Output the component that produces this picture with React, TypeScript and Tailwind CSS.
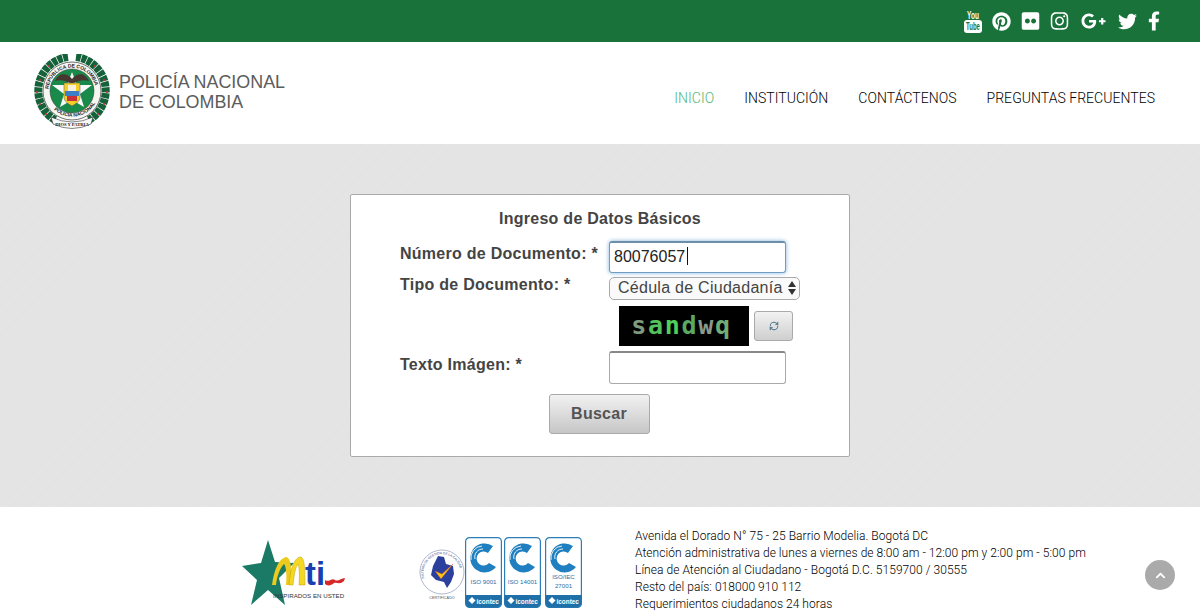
import React from 'react';
import { FaPinterest, FaFlickr, FaInstagram, FaGooglePlusG, FaTwitter, FaFacebookF, FaChevronUp } from 'react-icons/fa';
import { RefreshCw } from 'lucide-react';

const navItems = ['INICIO', 'INSTITUCIÓN', 'CONTÁCTENOS', 'PREGUNTAS FRECUENTES'];

const footerLines = [
  'Avenida el Dorado N° 75 - 25 Barrio Modelia. Bogotá DC',
  'Atención administrativa de lunes a viernes de 8:00 am - 12:00 pm y 2:00 pm - 5:00 pm',
  'Línea de Atención al Ciudadano - Bogotá D.C. 5159700 / 30555',
  'Resto del país: 018000 910 112',
  'Requerimientos ciudadanos 24 horas',
];

const captcha = [
  ['s', 'text-[#7f9a7f]'],
  ['a', 'text-[#55c25f]'],
  ['n', 'text-[#4fcf5a]'],
  ['d', 'text-[#5aa862]'],
  ['w', 'text-[#8a9a8a]'],
  ['q', 'text-[#6fae74]'],
];

const YoutubeIcon = () => (
  <svg viewBox="0 0 18 23" className="mr-[10px] h-[23px] w-[18px] shrink-0">
    <g transform="translate(9 0) scale(0.65 1)">
      <text x="0" y="8.5" textAnchor="middle" fontSize="10" fontWeight="700" fill="#fff" fontFamily="'Liberation Sans', sans-serif">You</text>
    </g>
    <rect x="0" y="10" width="18" height="13" rx="3" fill="#fff" />
    <g transform="translate(9 0) scale(0.6 1)">
      <text x="0" y="20.5" textAnchor="middle" fontSize="10" fontWeight="700" fill="#18723a" fontFamily="'Liberation Sans', sans-serif">Tube</text>
    </g>
  </svg>
);

const Crest = () => {
  const dots = [
    [6, 26], [3, 38], [6, 50], [12, 60], [70, 26], [73, 38], [70, 50], [64, 60], [15, 12], [61, 12],
  ];
  return (
    <svg viewBox="0 0 76 76" className="h-[76px] w-[76px] shrink-0">
      <defs>
        <path id="ring-top" d="M14.5 37 A23.5 23.5 0 0 1 61.5 37" />
        <path id="ring-bottom" d="M12 43 A27 27 0 0 0 64 43" />
      </defs>
      <path d="M34 3 A34 34 0 0 0 21 66" fill="none" stroke="#14613a" strokeWidth="8" strokeDasharray="5 0.7" />
      <path d="M42 3 A34 34 0 0 1 55 66" fill="none" stroke="#14613a" strokeWidth="8" strokeDasharray="5 0.7" />
      {dots.map(([cx, cy]) => (
        <circle key={`${cx}-${cy}`} cx={cx} cy={cy} r="1.1" fill="#c8313a" />
      ))}
      <circle cx="38" cy="37" r="29" fill="#f6f6f2" stroke="#333" strokeWidth="0.7" />
      <circle cx="38" cy="37" r="22" fill="#1a8a4a" stroke="#333" strokeWidth="0.5" />
      <text fontSize="5" fontWeight="700" fill="#222" fontFamily="'Liberation Sans', sans-serif">
        <textPath href="#ring-top" startOffset="2">REPÚBLICA DE COLOMBIA</textPath>
      </text>
      <text fontSize="5" fontWeight="700" fill="#222" fontFamily="'Liberation Sans', sans-serif">
        <textPath href="#ring-bottom" startOffset="15">POLICÍA NACIONAL</textPath>
      </text>
      <polygon points="38,18 43,31 58,31 46,40 50,53 38,46 26,53 30,40 18,31 33,31" fill="#f8f8f8" />
      <path d="M21 27 C26 17 34 20 38 25 C42 20 50 17 55 27 C49 25 44 27 38 30 C32 27 27 25 21 27 Z" fill="#463830" />
      <path d="M30 29 H46 V43 C46 48 41 50 38 52 C35 50 30 48 30 43 Z" fill="#f3cf2a" stroke="#555" strokeWidth="0.5" />
      <rect x="34" y="31" width="8" height="6" fill="#f5f0e0" />
      <rect x="31" y="37" width="14" height="5" fill="#3d7fc4" />
      <rect x="33" y="42" width="10" height="5" fill="#c8313a" />
      <path d="M17 63 Q38 73 59 63 L57 70 Q38 79 19 70 Z" fill="#f8f8f8" stroke="#333" strokeWidth="0.6" />
      <text x="38" y="72" textAnchor="middle" fontSize="4.6" fontWeight="700" fill="#222" fontFamily="'Liberation Serif', serif">DIOS Y PATRIA</text>
    </svg>
  );
};

const MtiLogo = () => (
  <svg viewBox="0 0 106 66" className="h-[66px] w-[106px] shrink-0">
    <polygon points="27,0 34,22 53,23 38,38 44,65 27,50 10,65 16,40 1,26 20,23" fill="#1a7a66" />
    <path d="M31 45 C33 30 38 18 45 17 C48 17 50 22 50 30 L50 45 L45 45 C46 34 45 26 43 24 C39 28 36 36 35 45 Z" fill="#eccb1e" />
    <path d="M48 45 C49 30 53 18 59 17 C63 17 64 24 64 45 L58 45 C59 34 58 26 57 24 C54 28 53 36 52 45 Z" fill="#f4d822" stroke="#c09a10" strokeWidth="0.5" />
    <text x="64" y="45" fontSize="34" fontWeight="700" fill="#1a3fb0" fontFamily="'Liberation Sans', sans-serif" textLength="20" lengthAdjust="spacingAndGlyphs">ti</text>
    <path d="M84 40 C88 43 91 37 94 40 C97 42 100 38 104 38 L103 41 C99 45 96 42 93 43 C90 46 86 46 84 44 Z" fill="#d62828" />
    <text x="32" y="58" fontSize="6.2" fill="#333" fontFamily="'Liberation Sans', sans-serif">INSPIRADOS EN USTED</text>
  </svg>
);

const IcontecCard = ({ lines }: { lines: string[] }) => (
  <svg viewBox="0 0 37 71" className="h-[71px] w-[37px] shrink-0">
    <rect x="0.6" y="0.6" width="35.8" height="69.8" rx="4" fill="#fff" stroke="#2c7db8" strokeWidth="1.2" />
    <path d="M28 9 A14.5 14.5 0 1 0 31 30 L24 26 A7 7 0 1 1 23 16 Z" fill="#1f7fc0" />
    <path d="M6 23 A12 12 0 0 1 17 9" fill="none" stroke="#fff" strokeWidth="0.9" />
    <path d="M10 22 A8 8 0 0 1 18 12" fill="none" stroke="#fff" strokeWidth="0.9" />
    {lines.map((line, i) => (
      <text key={line} x="18.5" y={lines.length === 1 ? 47 : 42 + i * 9} textAnchor="middle" fontSize="6.2" fill="#2a6fa8" fontFamily="'Liberation Sans', sans-serif">
        {line}
      </text>
    ))}
    <path d="M0.6 58 H36.4 V66 A4 4 0 0 1 32.4 70.4 H4.6 A4 4 0 0 1 0.6 66 Z" fill="#1f6fa8" />
    <rect x="4.5" y="61" width="5" height="5" transform="rotate(45 7 63.5)" fill="#fff" />
    <text x="11.5" y="66.5" fontSize="6.4" fontWeight="700" fill="#fff" fontFamily="'Liberation Sans', sans-serif">icontec</text>
  </svg>
);

const Seal = () => (
  <svg viewBox="0 0 46 58" className="h-[58px] w-[46px] shrink-0">
    <defs>
      <path id="seal-ring" d="M7 38 A18.5 18.5 0 1 1 39 38" />
    </defs>
    <circle cx="23" cy="28" r="22" fill="#fff" stroke="#9aa4c0" strokeWidth="0.8" />
    <text fontSize="3.2" fill="#2b3f8c" fontFamily="'Liberation Sans', sans-serif">
      <textPath href="#seal-ring" startOffset="4">SISTEMA DE GESTIÓN DE LA CALIDAD</textPath>
    </text>
    <path d="M19 12 L25 13 L27 20 L34 22 L35 30 L32 38 L28 44 L25 38 L17 36 L12 31 L14 22 Z" fill="#2b3f9c" />
    <path d="M16 27 L22 35 L34 20 L23 30 Z" fill="#f2c811" stroke="#e23b3b" strokeWidth="0.4" />
    <text x="23" y="55" textAnchor="middle" fontSize="3.8" fill="#555" fontFamily="'Liberation Sans', sans-serif">CERTIFICADO</text>
  </svg>
);

export default function App() {
  return (
    <div className="relative h-[610px] overflow-hidden bg-white font-['Liberation_Sans',sans-serif]">
      <div className="flex h-[42px] items-center justify-end bg-[#18723a] pr-[40px] text-white">
        <YoutubeIcon />
        <FaPinterest className="mr-[10px] h-[19px] w-[19px]" />
        <FaFlickr className="mr-[10px] h-[20px] w-[19px]" />
        <FaInstagram className="mr-[10px] h-[20px] w-[19px]" />
        <FaGooglePlusG className="mr-[10px] h-[20px] w-[29px]" />
        <FaTwitter className="mr-[11px] h-[19px] w-[19px]" />
        <FaFacebookF className="h-[20px] w-[12px]" />
      </div>

      <header className="flex h-[102px] items-center justify-between pb-[2px] pl-[34px] pr-[45px]">
        <div className="flex items-center gap-[9px]">
          <Crest />
          <div className="text-[17.9px] leading-[20px] text-[#5c5c5c]">
            <div>POLICÍA NACIONAL</div>
            <div>DE COLOMBIA</div>
          </div>
        </div>
        <nav className="flex gap-[30px] pt-[12px] font-['Roboto',sans-serif] text-[14px] font-light tracking-[0.04px] text-black">
          {navItems.map((item, i) => (
            <a key={item} className={i === 0 ? 'text-[#4fb870]' : ''}>
              {item}
            </a>
          ))}
        </nav>
      </header>

      <main className="flex h-[363px] justify-center bg-[#e4e4e4] bg-[repeating-linear-gradient(135deg,#e5e5e5_0,#e5e5e5_1px,#e3e3e3_1px,#e3e3e3_2px)] pt-[50px]">
        <div className="h-[263px] w-[500px] rounded-[2px] border border-[#aaa] bg-white text-[#444]">
          <h2 className="mt-[15px] text-center text-[16px] font-bold leading-[18px] tracking-[0.27px]">Ingreso de Datos Básicos</h2>

          <div className="mt-[13px] flex pl-[49px]">
            <label className="w-[209px] pt-[4px] text-[16px] font-bold leading-[18px] tracking-[0.27px]">Número de Documento: *</label>
            <div className="relative">
              <input
                readOnly
                value="80076057"
                className="h-[32px] w-[177px] rounded-[3px] border border-[#6f9dc4] border-t-2 border-t-[#6d8ea8] pb-[1px] pl-[4px] text-[16px] text-[#222] shadow-[0_0_4px_#7fb2dc] outline-none"
              />
              <span className="absolute left-[78px] top-[6px] h-[18px] w-px bg-[#111]" />
            </div>
          </div>

          <div className="mt-[3px] flex pl-[49px]">
            <label className="w-[209px] pt-[1px] text-[16px] font-bold leading-[15px] tracking-[0.27px]">Tipo de Documento: *</label>
            <div className="relative">
              <select className="h-[23px] w-[191px] appearance-none rounded-[5px] border border-[#aaa] bg-[#fafafa] pl-[8px] text-[16px] leading-[20px] tracking-[0.27px] text-[#444]">
                <option>Cédula de Ciudadanía</option>
              </select>
              <svg viewBox="0 0 8 14" className="pointer-events-none absolute right-[4px] top-[5px] h-[14px] w-[8px] fill-[#333]">
                <path d="M4 0 L8 6 H0 Z M0 8 H8 L4 14 Z" />
              </svg>
            </div>
          </div>

          <div className="mt-[6px] flex items-center pl-[268px]">
            <div className="flex h-[40px] w-[130px] items-center justify-center bg-black pr-[5px] font-['DejaVu_Sans_Mono',monospace] text-[25px] font-bold tracking-[1.7px]">
              {captcha.map(([letter, color]) => (
                <span key={letter} className={color}>
                  {letter}
                </span>
              ))}
            </div>
            <button className="ml-[5px] flex h-[30px] w-[39px] items-center justify-center rounded-[3px] border border-[#aaa] bg-gradient-to-b from-[#f2f2f2] to-[#cfcfcf]">
              <RefreshCw className="h-[10px] w-[10px] text-[#2a5a7c]" strokeWidth={2} />
            </button>
          </div>

          <div className="mt-[5px] flex pl-[49px]">
            <label className="w-[209px] pt-[5px] text-[16px] font-bold leading-[18px] tracking-[0.27px]">Texto Imágen: *</label>
            <input
              readOnly
              className="h-[33px] w-[177px] rounded-[3px] border border-[#aaa] border-t-2 border-t-[#888] bg-white"
            />
          </div>

          <div className="mt-[10px] flex justify-center">
            <button className="mr-[2px] h-[40px] w-[101px] rounded-[3px] border border-[#aaa] bg-gradient-to-b from-[#f2f2f2] to-[#c6c6c6] text-[16px] font-bold tracking-[0.27px] text-[#555]">
              Buscar
            </button>
          </div>
        </div>
      </main>

      <footer className="flex h-[103px] items-start pl-[241px]">
        <div className="pt-[33px]">
          <MtiLogo />
        </div>
        <div className="ml-[72px] flex items-start pt-[30px]">
          <div className="pt-[7px]">
            <Seal />
          </div>
          <IcontecCard lines={['ISO 9001']} />
          <span className="w-[2px]" />
          <IcontecCard lines={['ISO 14001']} />
          <span className="w-[4px]" />
          <IcontecCard lines={['ISO/IEC', '27001']} />
        </div>
        <div className="ml-[53px] pt-[21px] font-['Roboto',sans-serif] text-[12px] font-light leading-[17px] tracking-[0.05px] text-black">
          {footerLines.map((line) => (
            <div key={line}>{line}</div>
          ))}
        </div>
      </footer>

      <a className="absolute left-[1145px] top-[560px] flex h-[30px] w-[30px] items-center justify-center rounded-full bg-[#aaa] text-white">
        <FaChevronUp className="h-[11px] w-[11px]" />
      </a>
    </div>
  );
}
